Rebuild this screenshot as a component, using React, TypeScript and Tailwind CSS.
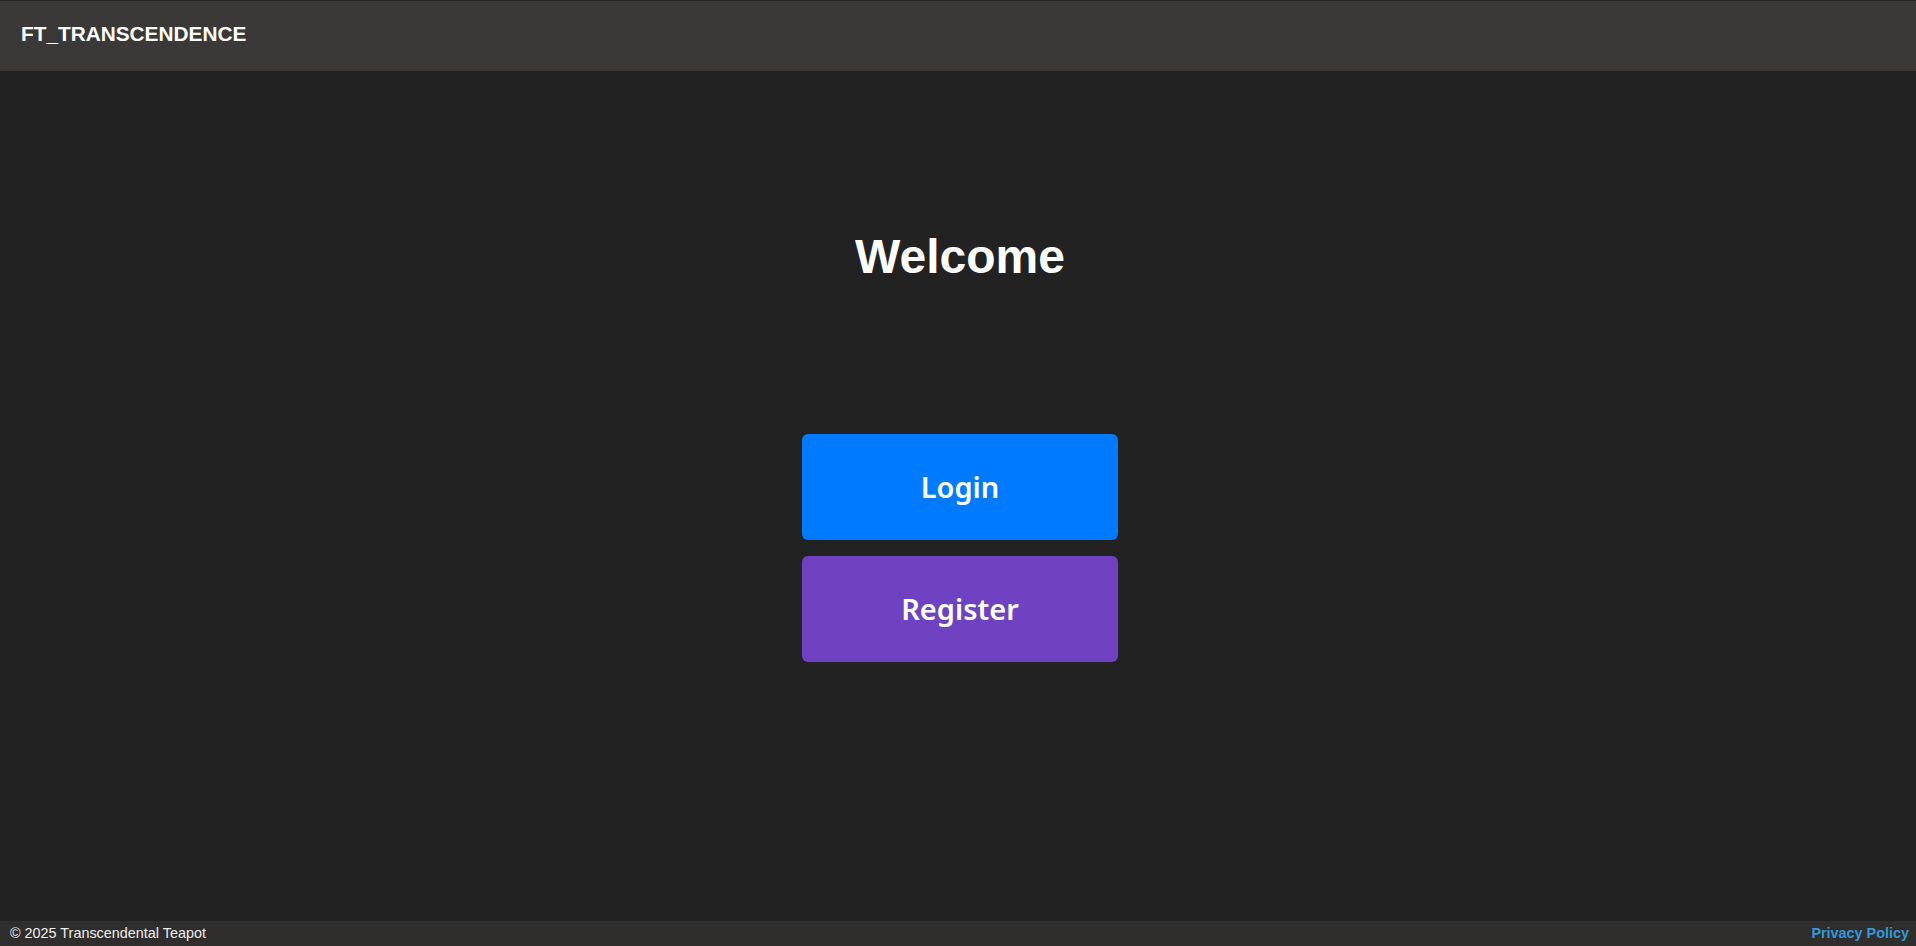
export default function App() {
  return (
    <div className="min-h-screen flex flex-col bg-[#222222] font-['Liberation_Sans',Arial,sans-serif] text-white">
      <header className="h-[71px] flex items-center px-[21px] pb-[5px] bg-[#3a3937] border-t border-[#262626]">
        <h1 className="text-[20.8px] font-bold">FT_TRANSCENDENCE</h1>
      </header>

      <main className="flex-1 flex flex-col items-center pt-[162px] pl-[4px]">
        <h2 className="text-5xl leading-none font-bold">Welcome</h2>

        <div className="mt-[153px] flex flex-col gap-4 w-[316px]">
          <button className="h-[106px] rounded-md bg-[#007bff] text-[29px] font-semibold font-['Noto_Sans',sans-serif] text-white">
            Login
          </button>
          <button className="h-[106px] rounded-md bg-[#6f42c1] text-[29px] font-semibold font-['Noto_Sans',sans-serif] text-white">
            Register
          </button>
        </div>
      </main>

      <footer className="h-[25px] flex items-center justify-between pl-[10px] pr-[7px] bg-[#2f2e2c] text-[14.4px]">
        <span className="text-[#eeeeee]">© 2025 Transcendental Teapot</span>
        <a href="#" className="font-bold text-[#3498db]">
          Privacy Policy
        </a>
      </footer>
    </div>
  );
}
